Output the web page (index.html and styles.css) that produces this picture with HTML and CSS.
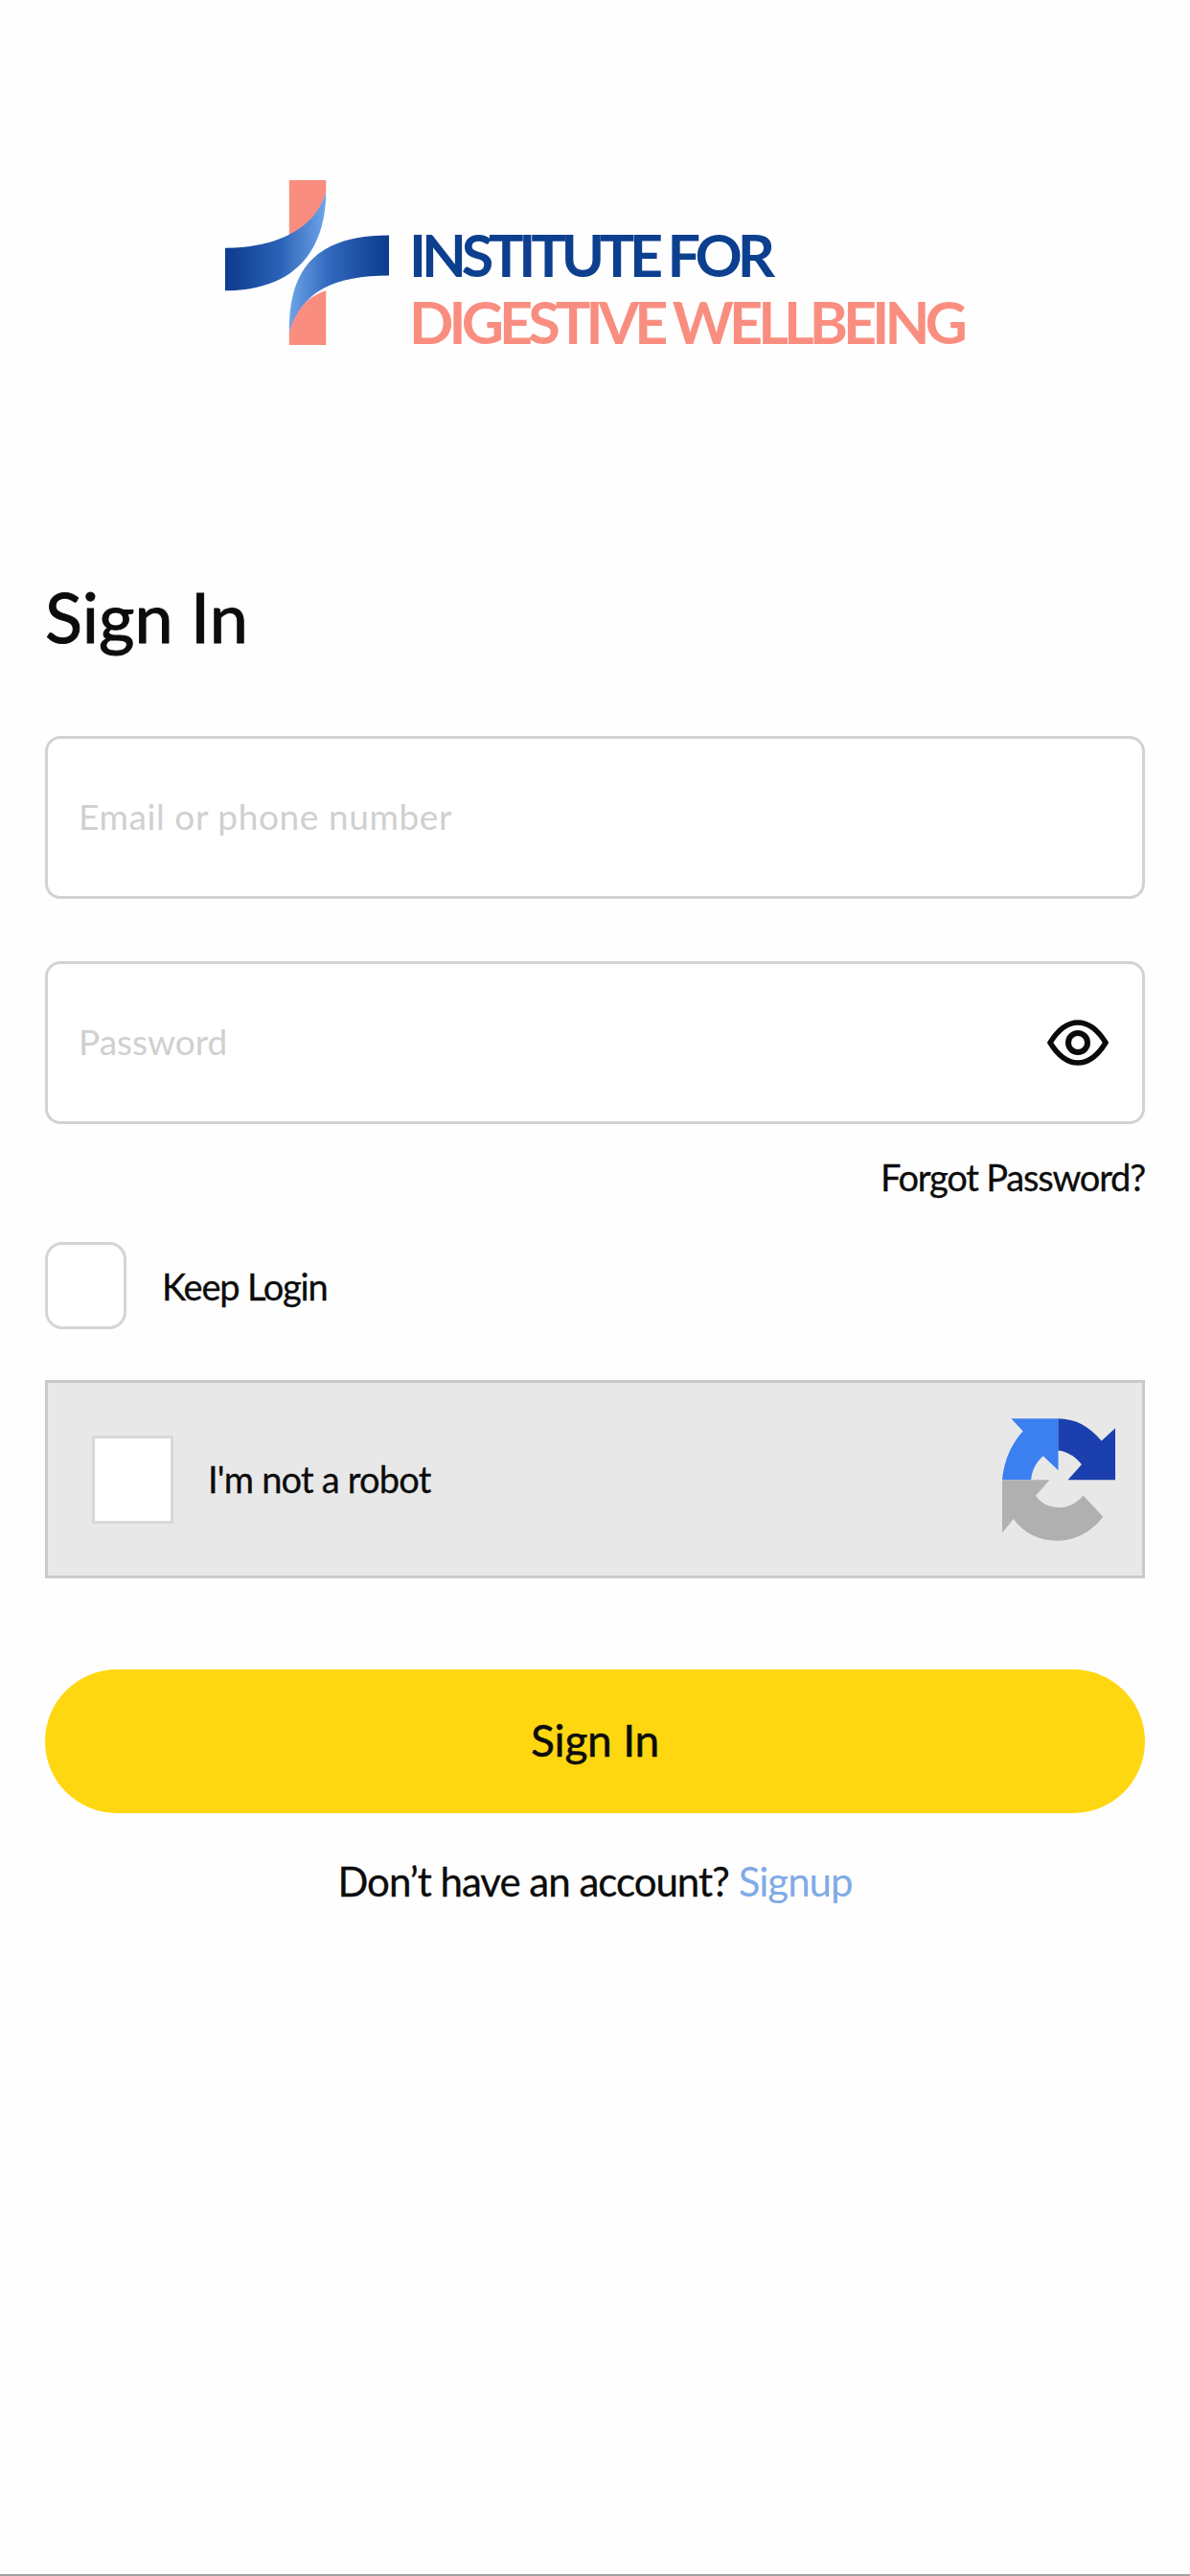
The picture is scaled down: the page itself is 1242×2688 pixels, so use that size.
FILE: index.html
```html
<!DOCTYPE html>
<html lang="en">
<head>
<meta charset="utf-8">
<title>Sign In</title>
<link rel="stylesheet" href="styles.css">
</head>
<body>
<main class="page">
  <div class="logo">
    <svg class="logo-mark" viewBox="65 85 320 515" preserveAspectRatio="none" aria-hidden="true">
      <defs>
        <linearGradient id="ribbonA" x1="0" y1="0" x2="1" y2="0">
          <stop offset="0" stop-color="#0b3b8c"/><stop offset="0.55" stop-color="#2c63b8"/><stop offset="1" stop-color="#6ea4e8"/>
        </linearGradient>
        <linearGradient id="ribbonB" x1="0" y1="0" x2="1" y2="0">
          <stop offset="0" stop-color="#6ea4e8"/><stop offset="0.4" stop-color="#3268bd"/><stop offset="1" stop-color="#0b3b8c"/>
        </linearGradient>
      </defs>
      <path fill="#f98e80" d="M190 85H262V120C250 190 225 245 190 270Z"/>
      <path fill="#f98e80" d="M190 560C200 490 225 450 262 430V600H190Z"/>
      <path fill="url(#ribbonA)" d="M65 297C150 297 240 250 262 120C262 260 225 430 65 430Z"/>
      <path fill="url(#ribbonB)" d="M385 257V383C280 383 215 430 190 560C190 400 220 257 385 257Z"/>
    </svg>
    <div class="logo-text">
      <span class="logo-line logo-blue">INSTITUTE FOR</span>
      <span class="logo-line logo-pink">DIGESTIVE WELLBEING</span>
    </div>
  </div>

  <h1 class="title">Sign In</h1>

  <div class="field"><span class="placeholder">Email or phone number</span></div>
  <div class="field field-password">
    <span class="placeholder placeholder-short">Password</span>
    <svg class="eye" viewBox="0 0 64 48" aria-hidden="true">
      <path class="eye-lens" d="M3 24C11 11 21 3 32 3S53 11 61 24C53 37 43 45 32 45S11 37 3 24Z"/>
      <circle class="eye-ring" cx="32" cy="24" r="10"/>
    </svg>
  </div>
  <a class="forgot">Forgot Password?</a>

  <div class="keep">
    <span class="keep-box"></span>
    <span class="keep-label">Keep Login</span>
  </div>

  <div class="captcha">
    <span class="captcha-box"></span>
    <span class="captcha-label">I'm not a robot</span>
    <svg class="captcha-mark" viewBox="140 118 353 382" aria-hidden="true">
      <path fill="#3b7ff0" d="M168 118H315V280L268 235C245 255 232 280 230 310H140C145 250 170 195 205 158Z"/>
      <path fill="#1b3fae" d="M315 118C370 118 415 145 450 188L493 148V310H345L388 262C370 238 345 222 315 218Z"/>
      <path fill="#b0b0b0" d="M140 310H288L245 358C265 395 340 420 393 358L455 425C420 470 370 500 310 500C255 500 205 475 175 432L140 475Z"/>
    </svg>
  </div>

  <button class="submit">Sign In</button>

  <p class="signup">Don’t have an account? <a class="signup-link">Signup</a></p>
</main>
</body>
</html>
```

FILE: styles.css
```css
* { box-sizing: border-box; }
html, body { margin: 0; padding: 0; }
body {
  background: #fefefe;
  color: #0c0c0c;
  font-family: Lato, "Open Sans", sans-serif;
}
.page {
  width: 1242px;
  height: 2688px;
  padding: 188px 47px 0;
  display: flex;
  flex-direction: column;
  border-bottom: 2px solid #a3a3a3;
}
.logo {
  display: flex;
  gap: 21px;
  height: 172px;
  margin-left: 188px;
}
.logo-mark { width: 171px; height: 172px; flex: none; }
.logo-text {
  display: flex;
  flex-direction: column;
  padding-top: 43px;
}
.logo-line {
  font-size: 61px;
  line-height: 70px;
  font-weight: 700;
  white-space: nowrap;
}
.logo-blue { color: #0d3f8f; letter-spacing: -5.2px; }
.logo-pink { color: #f98e80; letter-spacing: -4.9px; }
.title {
  margin: 238px 0 80px;
  font-size: 72px;
  line-height: 90px;
  font-weight: 400;
  -webkit-text-stroke: 1px #0c0c0c;
}
.field {
  height: 170px;
  border: 3px solid #d2d2d2;
  border-radius: 16px;
  background: #fff;
  padding: 0 33px 3px 32px;
  display: flex;
  align-items: center;
  justify-content: space-between;
}
.field-password { margin-top: 65px; padding-right: 35px; padding-bottom: 0; }
.placeholder {
  font-size: 37px;
  color: #cfd0d0;
  letter-spacing: 0.6px;
}
.placeholder-short { letter-spacing: 0; padding-bottom: 4px; }
.eye { width: 64px; height: 48px; fill: none; stroke: #0a0a0a; }
.eye-lens { stroke-width: 5.5; }
.eye-ring { stroke-width: 6; }
.forgot {
  margin-top: 30px;
  align-self: flex-end;
  font-size: 38px;
  line-height: 50px;
  letter-spacing: -1.2px;
  -webkit-text-stroke: 0.3px #0c0c0c;
}
.keep {
  margin-top: 43px;
  height: 91px;
  display: flex;
  align-items: center;
  gap: 37px;
}
.keep-box {
  width: 85px;
  height: 91px;
  border: 3px solid #d5d5d5;
  border-radius: 18px;
  background: #fff;
}
.keep-label {
  font-size: 38px;
  letter-spacing: -1.2px;
  -webkit-text-stroke: 0.3px #0c0c0c;
}
.captcha {
  margin-top: 53px;
  height: 207px;
  background: #e8e8e8;
  border: 3px solid #c9c9c9;
  padding: 0 28px 0 46px;
  display: flex;
  align-items: center;
}
.captcha-box {
  width: 85px;
  height: 92px;
  background: #fff;
  border: 3px solid #d8d8d8;
  flex: none;
}
.captcha-label {
  margin-left: 36px;
  padding-bottom: 2px;
  font-size: 38px;
  flex: 1;
  letter-spacing: -0.8px;
  -webkit-text-stroke: 0.3px #0c0c0c;
}
.captcha-mark { width: 118px; height: 128px; flex: none; }
.submit {
  margin-top: 95px;
  height: 150px;
  border: 0;
  border-radius: 75px;
  background: #ffd711;
  color: #0c0c0c;
  font-family: inherit;
  font-size: 46px;
  font-weight: 400;
  padding-bottom: 4px;
  letter-spacing: -0.2px;
  -webkit-text-stroke: 0.5px #0c0c0c;
}
.signup {
  margin: 46px 0 0;
  text-align: center;
  font-size: 42px;
  line-height: 50px;
  letter-spacing: -1px;
  -webkit-text-stroke: 0.3px #0c0c0c;
}
.signup-link { color: #7fabe6; -webkit-text-stroke: 0; }
```
